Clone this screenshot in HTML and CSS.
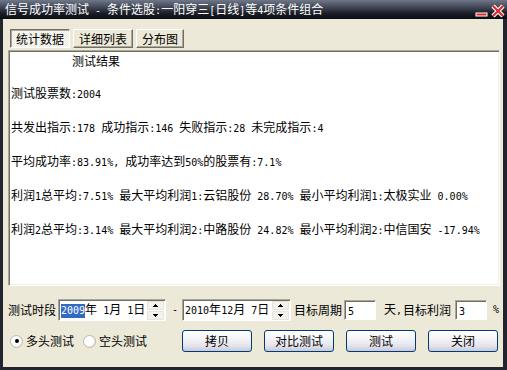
FILE: index.html
```html
<!DOCTYPE html>
<html lang="zh">
<head>
  <meta charset="UTF-8" />
  <title>信号成功率测试</title>
  <link rel="stylesheet" href="styles.css">
</head>
<body>
  <div class="window">
    <div class="titlebar">
      <span class="caption">信号成功率测试<span class="en"> - </span>条件选股<span class="en">:</span>一阳穿三<span class="en">[</span>日线<span class="en">]</span>等<span class="en">4</span>项条件组合</span>
      <svg class="caption-btns" width="32" height="16" viewBox="0 0 32 16">
        <rect x="2" y="11" width="11" height="3" fill="#e0262a" stroke="#fff" stroke-width="1" />
        <path d="M19 4l10 10M29 4L19 14" stroke="#fff" stroke-width="4.5" />
        <path d="M19 4l10 10M29 4L19 14" stroke="#e0262a" stroke-width="2.2" />
      </svg>
    </div>

    <div class="frame">
      <div class="tabs">
        <div class="tab active">统计数据</div>
        <div class="tab">详细列表</div>
        <div class="tab narrow">分布图</div>
      </div>

      <div class="output">
        <p class="heading">测试结果</p>
        <p>测试股票数<span class="en">:2004</span></p>
        <p>共发出指示<span class="en">:178 </span>成功指示<span class="en">:146 </span>失败指示<span class="en">:28 </span>未完成指示<span class="en">:4</span></p>
        <p>平均成功率<span class="en">:83.91%, </span>成功率达到<span class="en">50%</span>的股票有<span class="en">:7.1%</span></p>
        <p>利润<span class="en">1</span>总平均<span class="en">:7.51% </span>最大平均利润<span class="en">1:</span>云铝股份<span class="en"> 28.70% </span>最小平均利润<span class="en">1:</span>太极实业<span class="en"> 0.00%</span></p>
        <p>利润<span class="en">2</span>总平均<span class="en">:3.14% </span>最大平均利润<span class="en">2:</span>中路股份<span class="en"> 24.82% </span>最小平均利润<span class="en">2:</span>中信国安<span class="en"> -17.94%</span></p>
      </div>

      <div class="period">
        <span class="label">测试时段</span>
        <div class="date">
          <span class="date-text"><span class="en sel">2009</span>年<span class="en"> 1</span>月<span class="en"> 1</span>日</span>
          <div class="spin">
            <div class="spin-btn"><svg width="5" height="3"><polygon points="0,3 5,3 2.5,0" /></svg></div>
            <div class="spin-btn"><svg width="5" height="3"><polygon points="0,0 5,0 2.5,3" /></svg></div>
          </div>
        </div>
        <span class="en dash">-</span>
        <div class="date wide">
          <span class="date-text"><span class="en">2010</span>年<span class="en">12</span>月<span class="en"> 7</span>日</span>
          <div class="spin">
            <div class="spin-btn"><svg width="5" height="3"><polygon points="0,3 5,3 2.5,0" /></svg></div>
            <div class="spin-btn"><svg width="5" height="3"><polygon points="0,0 5,0 2.5,3" /></svg></div>
          </div>
        </div>
        <span class="label cycle">目标周期</span>
        <div class="field"><span class="en">5</span></div>
        <span class="label days">天<span class="en">,</span></span>
        <span class="label profit">目标利润</span>
        <div class="field profit-field"><span class="en">3</span></div>
        <span class="en percent">%</span>
      </div>

      <div class="actions">
        <span class="radio checked"></span>
        <span class="radio-label">多头测试</span>
        <span class="radio second"></span>
        <span class="radio-label">空头测试</span>
        <div class="buttons">
          <button class="btn">拷贝</button>
          <button class="btn">对比测试</button>
          <button class="btn">测试</button>
          <button class="btn">关闭</button>
        </div>
      </div>
    </div>
  </div>
</body>
</html>
```

FILE: styles.css
```css
:root {
  --face: #ece9d8;
  --frame: #22252e;
  --shadow: #716f64;
  --shadow-light: #aca899;
  --white: #ffffff;
  --select: #316ac5;
  --btn-border: #003c74;
}

* {
  box-sizing: border-box;
}

body {
  margin: 0;
  font: 12px/16px "Noto Sans CJK SC", "Noto Sans", sans-serif;
  color: #000;
}

p {
  margin: 0;
}

.en {
  font-family: "DejaVu Sans Mono", monospace;
  font-size: 10px;
  white-space: pre;
}

.window {
  width: 507px;
  height: 370px;
  display: flex;
  flex-direction: column;
  overflow: hidden;
}

/* title bar */
.titlebar {
  height: 19px;
  display: flex;
  align-items: center;
  padding-left: 5px;
  color: var(--white);
  background: linear-gradient(180deg, #707789 0%, #454b5a 35%, #1b1e27 70%, #0a0c12 100%);
}

.caption {
  white-space: nowrap;
  line-height: 16px;
}

.caption-btns {
  margin-left: auto;
  margin-right: 1px;
}

/* body of the window */
.frame {
  flex: 1;
  display: flex;
  flex-direction: column;
  background: var(--face);
  border-left: 3px solid var(--frame);
  border-right: 4px solid var(--frame);
  border-bottom: 3px solid var(--frame);
  padding: 10px 3px 0 5px;
}

.tabs {
  display: flex;
  gap: 3px;
  margin-left: 2px;
}

.tab {
  width: 60px;
  height: 19px;
  line-height: 17px;
  text-align: center;
  border: 1px solid;
  border-color: var(--white) var(--shadow) var(--shadow) var(--white);
  box-shadow: inset -1px -1px var(--shadow-light);
}

.tab.narrow {
  width: 48px;
}

.tab.active {
  border-color: var(--shadow) var(--white) var(--white) var(--shadow);
  box-shadow: inset 1px 1px var(--shadow-light);
  background: repeating-conic-gradient(#ffffff 0 25%, #ece9d8 0 50%) 0 0 / 2px 2px;
}

.output {
  margin-top: 2px;
  height: 236px;
  background: var(--white);
  border: 1px solid;
  border-color: var(--shadow-light) var(--white) var(--white) var(--shadow-light);
  box-shadow: inset 1px 1px var(--shadow), inset -1px -1px #f1efe2;
  padding: 2px 0 0 2px;
  overflow: hidden;
}

.output p {
  margin-bottom: 16px;
  white-space: nowrap;
}

.output .heading {
  padding-left: 61px;
}

/* period row */
.period {
  display: flex;
  align-items: center;
  height: 22px;
  margin-top: 13px;
  white-space: nowrap;
}

.label {
  line-height: 16px;
}

.date {
  width: 108px;
  height: 22px;
  margin-left: 2px;
  display: flex;
  align-items: center;
  background: var(--white);
  border: 1px solid;
  border-color: var(--shadow-light) var(--white) var(--white) var(--shadow-light);
  box-shadow: inset 1px 1px var(--shadow);
  padding: 1px 1px 1px 2px;
}

.date.wide {
  width: 109px;
  margin-left: 2px;
}

.date-text {
  flex: 1;
  line-height: 14px;
}

.sel {
  background: var(--select);
  color: var(--white);
  display: inline-block;
  line-height: 14px;
}

.spin {
  width: 17px;
  height: 19px;
  display: flex;
  flex-direction: column;
  gap: 1px;
}

.spin-btn {
  flex: 1;
  display: flex;
  align-items: center;
  justify-content: center;
  background: #f3f2ec;
  border: 1px solid #e6e3d8;
  border-radius: 1px;
}

.spin-btn svg {
  shape-rendering: crispEdges;
}

.dash {
  margin: 0 0 0 6px;
  width: 8px;
}

.cycle {
  margin-left: 3px;
}

.field {
  width: 32px;
  height: 20px;
  margin-left: 2px;
  background: var(--white);
  border: 1px solid;
  border-color: var(--shadow-light) var(--white) var(--white) var(--shadow-light);
  box-shadow: inset 1px 1px var(--shadow);
  padding: 1px 0 0 3px;
  line-height: 16px;
}

.days {
  margin-left: 8px;
}

.profit {
  margin-left: 1px;
}

.profit-field {
  margin-left: 4px;
}

.percent {
  margin-left: 6px;
}

/* radio + buttons row */
.actions {
  display: flex;
  align-items: center;
  height: 22px;
  margin-top: 9px;
}

.radio {
  width: 13px;
  height: 13px;
  margin-left: 2px;
  border-radius: 50%;
  border: 1px solid #bdbab0;
  background: radial-gradient(circle at 40% 40%, #ffffff 45%, #dddbd2 100%);
  display: flex;
  align-items: center;
  justify-content: center;
}

.radio.checked::after {
  content: "";
  width: 4px;
  height: 4px;
  border-radius: 50%;
  background: #000;
}

.radio.second {
  margin-left: 9px;
}

.radio-label {
  margin-left: 3px;
  line-height: 16px;
}

.buttons {
  display: flex;
  gap: 12px;
  margin-left: auto;
  margin-right: 2px;
}

.btn {
  width: 70px;
  height: 22px;
  padding: 0;
  font: inherit;
  line-height: 16px;
  color: #000;
  border: 1px solid var(--btn-border);
  border-radius: 3px;
  background: linear-gradient(180deg, #ffffff 0%, #f6f6f8 35%, #e3e3ec 75%, #c9c9d9 100%);
}
```
